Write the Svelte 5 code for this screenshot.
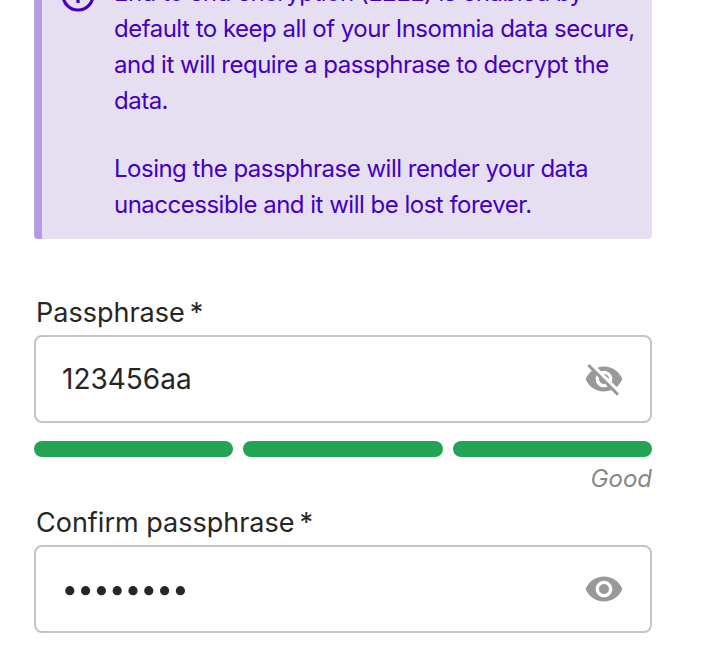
<script>
  let passphrase = $state('123456aa');
  const strength = [1, 2, 3];
</script>

<main>
  <section class="notice">
    <svg class="info" width="36" height="36" viewBox="0 0 36 36" fill="none" stroke="#4400c1" stroke-width="3.2">
      <circle cx="18" cy="18" r="15" />
      <path d="M18 17v9M18 10v3" />
    </svg>
    <div class="copy">
      <p>End to end encryption (E2EE) is enabled by<br />default to keep all of your Insomnia data secure,<br />and it will require a passphrase to decrypt the<br />data.</p>
      <p>Losing the passphrase will render your data<br />unaccessible and it will be lost forever.</p>
    </div>
  </section>

  <div class="label">Passphrase<span>*</span></div>
  <div class="field">
    <span class="value">{passphrase}</span>
    <svg width="40" height="40" viewBox="0 0 24 24" fill="#999"><path d="M12 7c2.76 0 5 2.24 5 5 0 .65-.13 1.26-.36 1.83l2.92 2.92c1.51-1.26 2.7-2.89 3.43-4.75-1.73-4.39-6-7.5-11-7.5-1.4 0-2.74.25-3.98.7l2.16 2.16C10.74 7.13 11.35 7 12 7zM2 4.27l2.28 2.28.46.46C3.08 8.3 1.78 10.02 1 12c1.73 4.39 6 7.5 11 7.5 1.55 0 3.03-.3 4.38-.84l.42.42L19.73 22 21 20.73 3.27 3 2 4.27zM7.53 9.8l1.55 1.55c-.05.21-.08.43-.08.65 0 1.66 1.34 3 3 3 .22 0 .44-.03.65-.08l1.55 1.55c-.67.33-1.41.53-2.2.53-2.76 0-5-2.24-5-5 0-.79.2-1.53.53-2.2zm4.31-.78l3.15 3.15.02-.16c0-1.66-1.34-3-3-3l-.17.01z" /></svg>
  </div>
  <div class="meter">{#each strength as part}<i></i>{/each}</div>
  <div class="rating">Good</div>

  <div class="label">Confirm passphrase<span>*</span></div>
  <div class="field">
    <svg width="140" height="36" fill="#262626">
      {#each passphrase as letter, i}<circle cx={7.8 + i * 15.8} cy="19.7" r="4.6" />{/each}
    </svg>
    <svg width="40" height="40" viewBox="0 0 24 24" fill="#999"><path d="M12 4.5C7 4.5 2.73 7.61 1 12c1.73 4.39 6 7.5 11 7.5s9.27-3.11 11-7.5c-1.73-4.39-6-7.5-11-7.5zM12 17c-2.76 0-5-2.24-5-5s2.24-5 5-5 5 2.24 5 5-2.24 5-5 5zm0-8c-1.66 0-3 1.34-3 3s1.34 3 3 3 3-1.34 3-3-1.34-3-3-3z" /></svg>
  </div>
</main>

<style>
  :global(body) { background: #fff; overflow: hidden; }
  main { box-sizing: border-box; height: 657px; padding: 0 56px 0 34px; overflow: hidden; font-family: Inter, sans-serif; color: #262626; }
  .notice { box-sizing: border-box; display: flex; height: 239px; margin-bottom: 56px; padding-left: 18px; border-left: 8px solid #b39ce4; border-radius: 0 0 4px 4px; background: #e6dff1; color: #4400c1; }
  .info { flex: none; margin-top: -23px; }
  .copy { margin: -25px 0 0 18px; white-space: nowrap; font-size: 24px; line-height: 36px; letter-spacing: -0.5px; }
  p { margin: 0 0 32px; }
  .label { height: 40px; padding-left: 2px; box-sizing: border-box; font-size: 27px; line-height: 35px; white-space: nowrap; }
  .label span { margin-left: 5px; }
  .field { box-sizing: border-box; display: flex; align-items: center; justify-content: space-between; height: 88px; padding: 0 26px; border: 2px solid #c4c4c4; border-radius: 8px; }
  .value { font-size: 28px; line-height: 36px; }
  .meter { display: grid; grid-template-columns: repeat(3, 1fr); gap: 10px; margin-top: 18px; }
  .meter i { height: 16px; border-radius: 8px; background: #23a455; }
  .rating { height: 48px; box-sizing: border-box; padding-top: 4px; text-align: right; color: #888; font-size: 24px; line-height: 36px; font-style: italic; }
</style>
